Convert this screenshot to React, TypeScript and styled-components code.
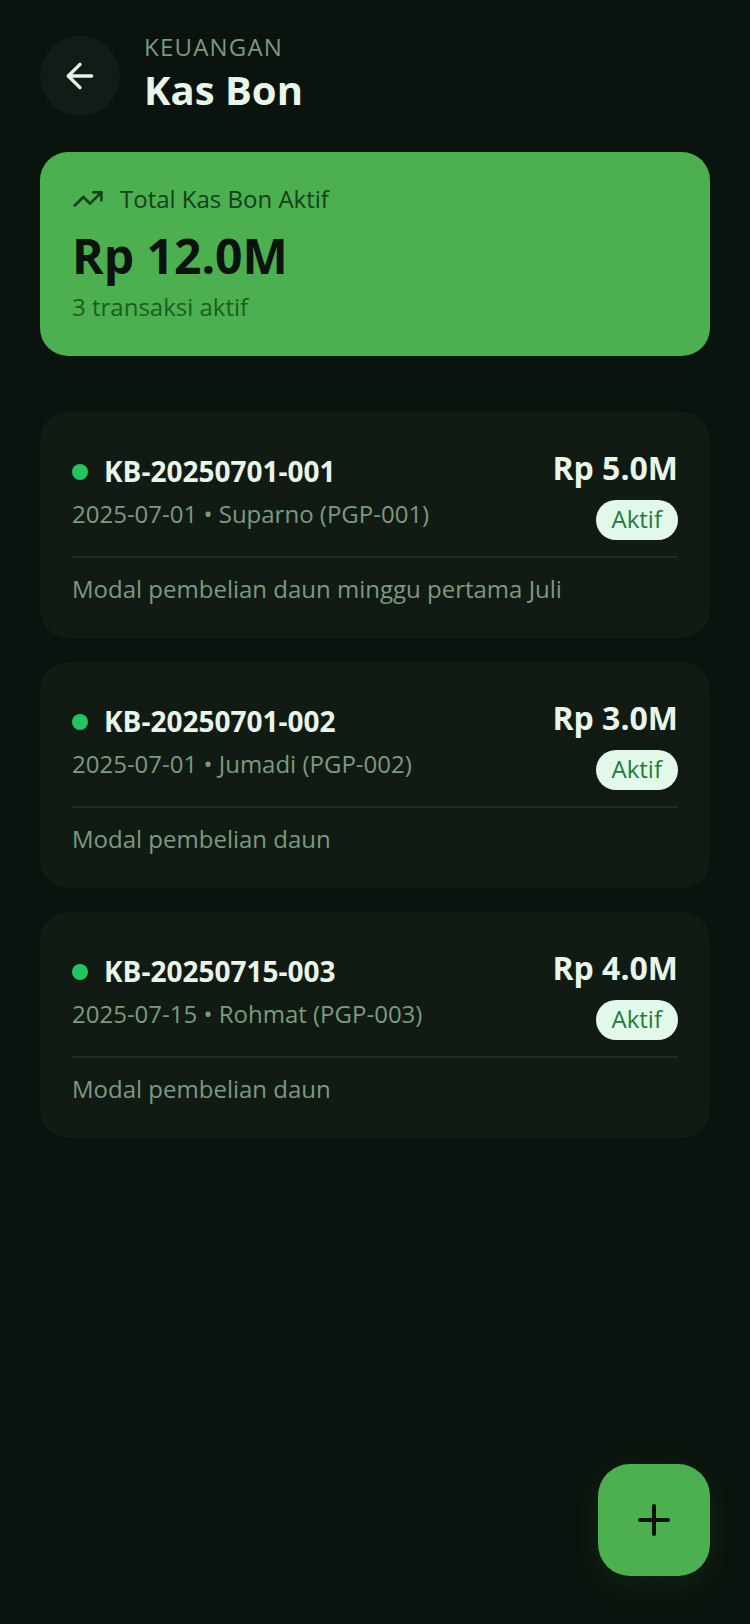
import React from 'react'
import styled, { createGlobalStyle } from 'styled-components'
import { ArrowLeft, Plus, TrendingUp } from 'lucide-react'

const GlobalStyle = createGlobalStyle`
  html, body {
    margin: 0;
    padding: 0;
    background: #0a130d;
  }
  * {
    box-sizing: border-box;
  }
`

const loans = [
  { id: 'KB-20250701-001', meta: '2025-07-01 • Suparno (PGP-001)', amount: 'Rp 5.0M', note: 'Modal pembelian daun minggu pertama Juli' },
  { id: 'KB-20250701-002', meta: '2025-07-01 • Jumadi (PGP-002)', amount: 'Rp 3.0M', note: 'Modal pembelian daun' },
  { id: 'KB-20250715-003', meta: '2025-07-15 • Rohmat (PGP-003)', amount: 'Rp 4.0M', note: 'Modal pembelian daun' },
]

const App = () => {
  return (
    <Page>
      <GlobalStyle />
      <Header>
        <BackButton>
          <ArrowLeft size={40} strokeWidth={2} />
        </BackButton>
        <HeaderText>
          <Eyebrow>KEUANGAN</Eyebrow>
          <Title>Kas Bon</Title>
        </HeaderText>
      </Header>

      <Summary>
        <SummaryLabel>
          <TrendingUp size={32} strokeWidth={2} />
          Total Kas Bon Aktif
        </SummaryLabel>
        <SummaryAmount>Rp 12.0M</SummaryAmount>
        <SummaryCount>3 transaksi aktif</SummaryCount>
      </Summary>

      <LoanList>
        {loans.map((loan) => (
          <LoanCard key={loan.id}>
            <LoanTop>
              <div>
                <LoanId>
                  <Dot />
                  {loan.id}
                </LoanId>
                <LoanMeta>{loan.meta}</LoanMeta>
              </div>
              <LoanSide>
                <LoanAmount>{loan.amount}</LoanAmount>
                <Badge>Aktif</Badge>
              </LoanSide>
            </LoanTop>
            <LoanNote>{loan.note}</LoanNote>
          </LoanCard>
        ))}
      </LoanList>

      <Fab>
        <Plus size={48} strokeWidth={2} />
      </Fab>
    </Page>
  )
}

const Page = styled.div`
  position: relative;
  width: 750px;
  height: 1624px;
  padding: 36px 40px 0;
  overflow: hidden;
  background: #0a130d;
  font-family: 'Open Sans', sans-serif;
`
const Header = styled.header`
  display: flex;
  align-items: center;
  gap: 24px;
  height: 80px;
`
const BackButton = styled.button`
  display: flex;
  align-items: center;
  justify-content: center;
  width: 80px;
  height: 80px;
  padding: 0;
  border: 0;
  border-radius: 50%;
  background: #121b15;
  color: #e8f5e9;
`
const HeaderText = styled.div`
  display: flex;
  flex-direction: column;
  gap: 4px;
`
const Eyebrow = styled.span`
  font-size: 24px;
  line-height: 24px;
  letter-spacing: 1.2px;
  color: #7c9a7e;
`
const Title = styled.h1`
  margin: 0;
  font-size: 40px;
  line-height: 54px;
  font-weight: 700;
  color: #e8f5e9;
`
const Summary = styled.section`
  display: flex;
  flex-direction: column;
  height: 204px;
  margin-top: 36px;
  padding: 31px 32px;
  border-radius: 28px;
  background: #4caf50;
`
const SummaryLabel = styled.div`
  display: flex;
  align-items: center;
  gap: 16px;
  font-size: 24px;
  line-height: 32px;
  color: #14401c;
`
const SummaryAmount = styled.div`
  margin-top: 8px;
  font-size: 48px;
  line-height: 65px;
  font-weight: 700;
  color: #0a130d;
`
const SummaryCount = styled.div`
  margin-top: 3px;
  font-size: 24px;
  line-height: 32px;
  color: #1b5e20;
`
const LoanList = styled.div`
  display: flex;
  flex-direction: column;
  gap: 24px;
  margin-top: 56px;
`
const LoanCard = styled.article`
  height: 226px;
  padding: 32px;
  border-radius: 28px;
  background: #111b14;
`
const LoanTop = styled.div`
  display: flex;
  justify-content: space-between;
  height: 110px;
  margin-top: 4px;
  margin-bottom: -4px;
  border-bottom: 2px solid #1e2b22;
`
const LoanId = styled.div`
  display: flex;
  align-items: center;
  gap: 16px;
  margin-top: 4px;
  font-size: 28px;
  line-height: 38px;
  font-weight: 700;
  color: #e8f5e9;
`
const Dot = styled.span`
  width: 16px;
  height: 16px;
  margin-top: 2px;
  border-radius: 50%;
  background: #22c55e;
`
const LoanMeta = styled.div`
  margin-top: 8px;
  font-size: 24px;
  line-height: 32px;
  color: #7c9a7e;
`
const LoanSide = styled.div`
  display: flex;
  flex-direction: column;
  align-items: flex-end;
`
const LoanAmount = styled.div`
  margin-top: -2px;
  font-size: 32px;
  line-height: 44px;
  font-weight: 700;
  color: #e8f5e9;
`
const Badge = styled.span`
  margin-top: 10px;
  padding: 0 16px;
  height: 40px;
  border-radius: 20px;
  font-size: 24px;
  line-height: 38px;
  background: #e2f8e8;
  color: #1f7a3f;
`
const LoanNote = styled.div`
  margin-top: 19px;
  font-size: 24px;
  line-height: 32px;
  color: #7c9a7e;
`
const Fab = styled.button`
  position: absolute;
  right: 40px;
  bottom: 48px;
  display: flex;
  align-items: center;
  justify-content: center;
  width: 112px;
  height: 112px;
  padding: 0;
  border: 0;
  border-radius: 32px;
  background: #4caf50;
  color: #0a130d;
  box-shadow: 0 8px 32px rgba(76, 175, 80, 0.12);
`

export default App
